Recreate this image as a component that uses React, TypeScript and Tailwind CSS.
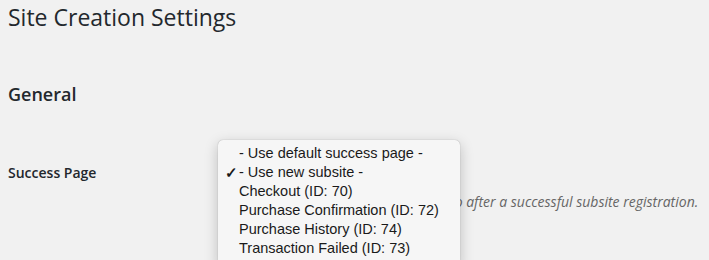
const options = [
  "- Use default success page -",
  "- Use new subsite -",
  "Checkout (ID: 70)",
  "Purchase Confirmation (ID: 72)",
  "Purchase History (ID: 74)",
  "Transaction Failed (ID: 73)",
];

const selected = 1;

export default function App() {
  return (
    <div className="h-[260px] w-[709px] overflow-hidden bg-[#f1f1f1] font-['Open_Sans',sans-serif] text-[#23282d]">
      <div className="pl-2">
        <h1 className="pt-[3px] text-[23px] leading-[29px] font-normal">Site Creation Settings</h1>
        <h2 className="mt-[50px] text-[18px] leading-[24px] font-semibold">General</h2>

        <div className="relative mt-[46px] flex">
          <div className="w-[210px] pt-[11px] text-[14px] font-semibold leading-[20px]">Success Page</div>
          <div className="pt-[4px]">
            <div className="h-[28px] w-[230px] rounded-[3px] border border-[#ddd] bg-white" />
            <p className="mt-[8px] ml-[2px] text-[14px] italic leading-[20px] text-[#666]">
              Select a page users will be redirected to after a successful subsite registration.
            </p>
          </div>

          <div className="absolute top-[-12px] left-[210px] w-[242px] rounded-t-[5px] bg-[#f6f6f6] pt-[4px] pb-[8px] shadow-[0_0_1px_rgba(0,0,0,0.35),0_4px_14px_rgba(0,0,0,0.22)] font-['Liberation_Sans',Arial,sans-serif] text-[14.5px] leading-[19px] text-[#1a1a1a]">
            {options.map((o, i) => (
              <div key={o} className="flex pl-[7px]">
                <span className="w-[14px] text-[15px] font-bold">{i === selected ? "✓" : ""}</span>
                <span>{o}</span>
              </div>
            ))}
          </div>
        </div>
      </div>
    </div>
  );
}
